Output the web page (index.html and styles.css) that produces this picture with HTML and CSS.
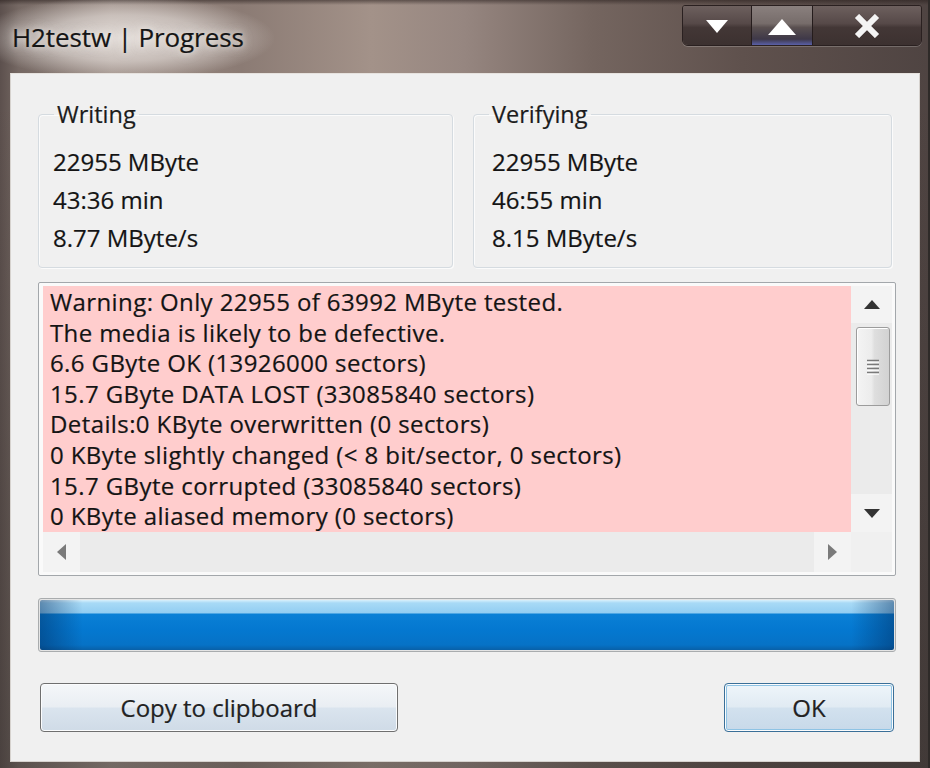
FILE: index.html
```html
<!DOCTYPE html>
<html>
<head>
<meta charset="utf-8">
<title>H2testw | Progress</title>
<link rel="stylesheet" href="styles.css">
</head>
<body>
<div class="window">
  <div class="titlebar">
    <div class="title">H2testw | Progress</div>
    <div class="caption">
      <div class="cbtn min">
        <svg width="24" height="16" viewBox="0 0 24 16"><polygon points="1,2 23,2 12,15" fill="#fff"/></svg>
      </div>
      <div class="cbtn max">
        <svg width="30" height="18" viewBox="0 0 30 18"><polygon points="15,1 29,17 1,17" fill="#fff"/></svg>
      </div>
      <div class="cbtn close">
        <svg width="26" height="24" viewBox="0 0 26 24"><path d="M3 2 L23 22 M23 2 L3 22" stroke="#f4f4f4" stroke-width="6" stroke-linecap="butt"/></svg>
      </div>
    </div>
  </div>
  <div class="client">
    <div class="groups">
      <fieldset class="group">
        <legend>Writing</legend>
        <div class="line">22955 MByte</div>
        <div class="line">43:36 min</div>
        <div class="line">8.77 MByte/s</div>
      </fieldset>
      <fieldset class="group group-right">
        <legend>Verifying</legend>
        <div class="line">22955 MByte</div>
        <div class="line">46:55 min</div>
        <div class="line">8.15 MByte/s</div>
      </fieldset>
    </div>
    <div class="log">
      <div class="logtext">
        <div>Warning: Only 22955 of 63992 MByte tested.</div>
        <div>The media is likely to be defective.</div>
        <div>6.6 GByte OK (13926000 sectors)</div>
        <div>15.7 GByte DATA LOST (33085840 sectors)</div>
        <div>Details:0 KByte overwritten (0 sectors)</div>
        <div>0 KByte slightly changed (&lt; 8 bit/sector, 0 sectors)</div>
        <div>15.7 GByte corrupted (33085840 sectors)</div>
        <div>0 KByte aliased memory (0 sectors)</div>
      </div>
      <div class="vscroll">
        <div class="sbtn up"><svg width="16" height="9" viewBox="0 0 16 9"><polygon points="8,0 16,9 0,9" fill="#333"/></svg></div>
        <div class="thumb">
          <svg width="16" height="18" viewBox="0 0 16 18"><path d="M2 2.5 H14 M2 6.5 H14 M2 10.5 H14 M2 14.5 H14" stroke="#7a7a7a" stroke-width="1.6"/><path d="M2 4.2 H14 M2 8.2 H14 M2 12.2 H14 M2 16.2 H14" stroke="#fff" stroke-width="1"/></svg>
        </div>
        <div class="track"></div>
        <div class="sbtn down"><svg width="16" height="9" viewBox="0 0 16 9"><polygon points="0,0 16,0 8,9" fill="#333"/></svg></div>
      </div>
      <div class="hscroll">
        <div class="hbtn"><svg width="9" height="16" viewBox="0 0 9 16"><polygon points="9,0 9,16 0,8" fill="#7a7a7a"/></svg></div>
        <div class="htrack"></div>
        <div class="hbtn"><svg width="9" height="16" viewBox="0 0 9 16"><polygon points="0,0 9,8 0,16" fill="#7a7a7a"/></svg></div>
      </div>
      <div class="corner"></div>
    </div>
    <div class="progress"><div class="fill"></div></div>
    <div class="buttons">
      <button class="btn copy">Copy to clipboard</button>
      <button class="btn ok">OK</button>
    </div>
  </div>
</div>
</body>
</html>
```
FILE: styles.css
```css
* { box-sizing: border-box; }
html, body { margin: 0; padding: 0; }
body {
  width: 930px;
  height: 768px;
  overflow: hidden;
  font-family: "Open Sans", "Segoe UI", sans-serif;
  background: #4a4442;
}
.window {
  width: 930px;
  height: 768px;
  display: flex;
  flex-direction: column;
  background:
    radial-gradient(ellipse 150px 42px at 125px 38px, rgba(232,226,222,0.95), rgba(232,226,222,0.6) 55%, rgba(232,226,222,0) 100%),
    linear-gradient(to bottom, rgba(40,30,28,0.55) 0, rgba(40,30,28,0) 5px, rgba(0,0,0,0) 100px, rgba(40,38,36,0.35) 100%),
    linear-gradient(to right, #5c504d 0, #756863 2%, #9b8c85 12%, #8b7b74 26%, #a39289 40%, #968680 50%, #74655f 64%, #5f514d 80%, #4f4442 100%);
  border-right: 2px solid #2e2a28;
}
.titlebar {
  height: 73px;
  display: flex;
  align-items: flex-start;
  flex: none;
}
.title {
  margin: 22px 0 0 12px;
  font-size: 26px;
  line-height: 30px;
  letter-spacing: -0.1px;
  color: #151515;
  -webkit-text-stroke: 0.2px #151515;
  text-shadow: 0 0 6px rgba(240,236,232,0.9), 0 0 12px rgba(240,236,232,0.7);
}
.caption {
  margin: 5px 6px 0 auto;
  display: flex;
  height: 41px;
  border: 1px solid #2a2020;
  border-radius: 3px 3px 6px 6px;
  overflow: hidden;
  box-shadow: 0 1px 0 rgba(255,255,255,0.2), inset 0 1px 0 rgba(255,255,255,0.15);
}
.cbtn {
  display: flex;
  align-items: center;
  justify-content: center;
  background: linear-gradient(to bottom, #6d605e 0, #564948 45%, #433736 55%, #3c3130 100%);
  border-left: 1px solid #251c1c;
}
.cbtn.min { width: 68px; border-left: none; }
.cbtn.max {
  width: 61px;
  background: linear-gradient(to bottom, #8a807e 0, #766c6a 45%, #5a5050 55%, #3e3848 85%, #5a60a8 100%);
}
.cbtn.close { width: 109px; }
.cbtn svg { display: block; }
.cbtn.max svg { margin-top: 2px; }

.client {
  flex: 1;
  margin: 0 8px 6px 10px;
  background: #f0f0f0;
  border: 1px solid #d6d2ce;
  border-top-color: #e6e2de;
  padding: 25px 23px 0 27px;
  display: flex;
  flex-direction: column;
}
.groups {
  display: flex;
  gap: 20px;
  margin-right: 4px;
}
.group {
  flex: 1;
  min-width: 0;
  margin: 0;
  padding: 14px 0 10px 14px;
  border: 1px solid #d5dbe0;
  border-radius: 4px;
  box-shadow: inset 1px 1px 0 #fbfbfb, 1px 1px 0 #fbfbfb;
}
.group legend {
  padding: 0 3px;
  margin-left: 1px;
  font-size: 23.5px;
  line-height: 30px;
  color: #1c1c1c;
  -webkit-text-stroke: 0.2px #1c1c1c;
}
.group-right { padding-left: 18px; }
.group-right legend { margin-left: -3px; }
.line {
  font-size: 24px;
  line-height: 38px;
  color: #141414;
  -webkit-text-stroke: 0.2px #141414;
}
.log {
  margin-top: 14px;
  height: 294px;
  border: 1px solid #a3a7ab;
  border-radius: 2px;
  background: #fafafa;
  padding: 3px 3px 3px 4px;
  display: grid;
  grid-template-columns: 1fr 41px;
  grid-template-rows: 246px 1fr;
}
.logtext {
  background: #ffcdcd;
  padding: 1px 0 0 7px;
  font-size: 24px;
  line-height: 30.6px;
  letter-spacing: 0.4px;
  color: #141414;
  -webkit-text-stroke: 0.2px #141414;
  overflow: hidden;
  white-space: nowrap;
}
.vscroll {
  background: #ebebeb;
  display: flex;
  flex-direction: column;
}
.sbtn {
  height: 37px;
  display: flex;
  align-items: center;
  justify-content: center;
  background: #f3f3f3;
}
.sbtn.down { height: 38px; }
.thumb {
  margin: 4px 2px 0 5px;
  height: 79px;
  border: 1px solid #9c9c9c;
  border-radius: 3px;
  background: linear-gradient(to right, #f4f4f4 0, #ececec 45%, #dedede 55%, #d2d2d2 100%);
  box-shadow: inset 1px 1px 0 #fff;
  display: flex;
  align-items: center;
  justify-content: center;
}
.track { flex: 1; }
.hscroll {
  display: flex;
  background: #ebebeb;
}
.hbtn {
  width: 37px;
  display: flex;
  align-items: center;
  justify-content: center;
  background: #f3f3f3;
}
.htrack { flex: 1; }
.corner { background: #f0f0f0; }

.progress {
  margin-top: 22px;
  height: 54px;
  border: 1px solid #a9acae;
  border-radius: 3px;
  padding: 1px;
  background: #e4e4e4;
}
.fill {
  height: 100%;
  border-radius: 2px;
  background:
    linear-gradient(to right, rgba(0,40,90,0.45) 0, rgba(0,40,90,0) 5%, rgba(0,40,90,0) 95%, rgba(0,40,90,0.45) 100%),
    linear-gradient(to bottom, #d8f0fc 0, #a8daf6 6%, #92cdf2 26%, #0a80d6 28%, #0478d0 60%, #0672c6 90%, #0860a8 100%);
}
.buttons {
  margin-top: 31px;
  display: flex;
  justify-content: space-between;
  padding: 0 2px;
}
.btn {
  height: 49px;
  font-family: "Open Sans", "Segoe UI", sans-serif;
  font-size: 24px;
  color: #222;
  -webkit-text-stroke: 0.2px #222;
  border: 1px solid #6f6f6f;
  border-radius: 4px;
  background: linear-gradient(to bottom, #f5f7f9 0, #e9eef3 48%, #dae4ee 52%, #cfdbe7 100%);
  box-shadow: inset 0 0 0 1px #fbfcfd;
  padding: 0;
}
.btn.copy { width: 358px; }
.btn.ok {
  width: 170px;
  border-color: #3a6f98;
  box-shadow: inset 0 0 0 1px #fbfcfd, inset 0 0 0 2px #8ec3e4;
  background: linear-gradient(to bottom, #eef5fa 0, #e1ebf3 48%, #d2e1ee 52%, #c7d9e9 100%);
}
```
